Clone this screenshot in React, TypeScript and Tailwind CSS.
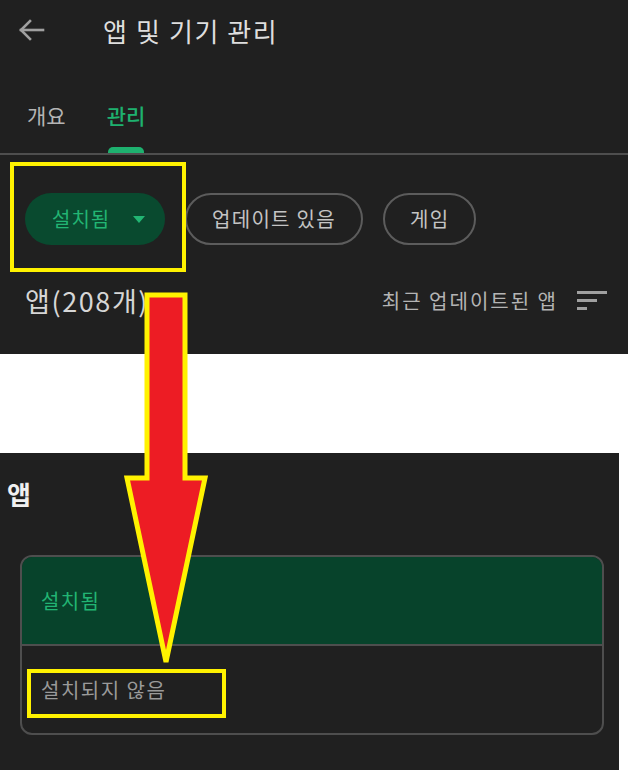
import React from 'react';

const font = { fontFamily: '"Noto Sans CJK KR", "Noto Sans", sans-serif' };

const BackArrow = () => (
  <svg width="28" height="24" viewBox="0 0 28 24" fill="none" stroke="#a0a0a0" strokeWidth="2.6" strokeLinecap="square">
    <path d="M26 12H4" />
    <path d="M13 3L4 12l9 9" />
  </svg>
);

const SortIcon = () => (
  <svg width="30" height="20" viewBox="0 0 30 20" fill="#a0a0a0">
    <rect x="0" y="0" width="30" height="3" />
    <rect x="0" y="8" width="20" height="3" />
    <rect x="0" y="16" width="10" height="3" />
  </svg>
);

const Chip = ({ label }: { label: string }) => (
  <div className="h-[52px] px-[25px] flex items-center rounded-full border-2 border-[#5c5c5c] text-[20px] tracking-[1.3px] text-[#c4c4c4]">
    {label}
  </div>
);

export default function App() {
  return (
    <div className="relative w-[628px] h-[770px] bg-white overflow-hidden" style={font}>
      {/* top screen */}
      <div className="h-[354px] bg-[#202020] flex flex-col">
        <div className="h-[60px] flex items-center pl-[17px]">
          <BackArrow />
          <span className="ml-[58px] text-[26px] tracking-[1.6px] text-[#dedede]">앱 및 기기 관리</span>
        </div>
        <div className="h-[93px] flex items-end pl-[27px] gap-[41px]">
          <div className="flex flex-col items-center">
            <span className="text-[21px] text-[#b4b4b4] leading-[28px]">개요</span>
            <div className="h-[6px] mt-[18px]" />
          </div>
          <div className="flex flex-col items-center">
            <span className="text-[21px] text-[#1eb16f] leading-[28px] font-medium">관리</span>
            <div className="w-[36px] h-[6px] mt-[18px] rounded-t-[5px] bg-[#1eb16f]" />
          </div>
        </div>
        <div className="h-[2px] bg-[#4e4e4e]" />
        <div className="relative flex items-center gap-[20px] pl-[25px] mt-[38px]">
          <div className="h-[52px] w-[140px] pl-[27px] pr-[20px] flex items-center justify-between rounded-full bg-[#094a2f] text-[20px] tracking-[1px] text-[#22b573]">
            <span>설치됨</span>
            <svg width="12" height="7" viewBox="0 0 12 7"><path d="M0 0h12L6 7z" fill="#22b573" /></svg>
          </div>
          <Chip label="업데이트 있음" />
          <Chip label="게임" />
          <div className="absolute left-[10px] top-[-31px] w-[176px] h-[110px] border-[4px] border-[#fff200]" />
        </div>
        <div className="flex items-center justify-between pl-[25px] pr-[21px] mt-[36px]">
          <span className="text-[27px] tracking-[1.6px] text-[#d6d6d6]">앱(208개)</span>
          <div className="flex items-center gap-[19px]">
            <span className="text-[20px] tracking-[2px] text-[#b4b4b4]">최근 업데이트된 앱</span>
            <SortIcon />
          </div>
        </div>
      </div>

      {/* bottom screen */}
      <div className="mt-[99px] w-[619px] h-[317px] bg-[#202020] flex flex-col">
        <div className="pl-[7px] pt-[24px] text-[26px] font-bold text-[#f0f0f0] leading-[34px]">앱</div>
        <div className="relative mt-[44px] ml-[20px] w-[584px] h-[180px] rounded-[12px] border-2 border-[#4e4e4e] overflow-hidden flex flex-col">
          <div className="h-[89px] bg-[#07432b] border-b-2 border-[#4e4e4e] flex items-center pl-[19px] text-[20px] tracking-[1.3px] text-[#22b573]">
            설치됨
          </div>
          <div className="flex-1 flex items-center pl-[19px]">
            <span className="text-[20px] tracking-[1.5px] text-[#9a9a9a]">설치되지 않음</span>
          </div>
          <div className="absolute left-[5px] top-[112px] w-[199px] h-[49px] border-[4px] border-[#fff200]" />
        </div>
      </div>

      {/* red arrow */}
      <svg className="absolute left-0 top-0 pointer-events-none" width="628" height="770">
        <polygon
          points="147,295 185,295 185,478 205,478 166,662 127,478 147,478"
          fill="#ed1c24"
          stroke="#fff200"
          strokeWidth="5"
          strokeLinejoin="miter"
        />
      </svg>
    </div>
  );
}
